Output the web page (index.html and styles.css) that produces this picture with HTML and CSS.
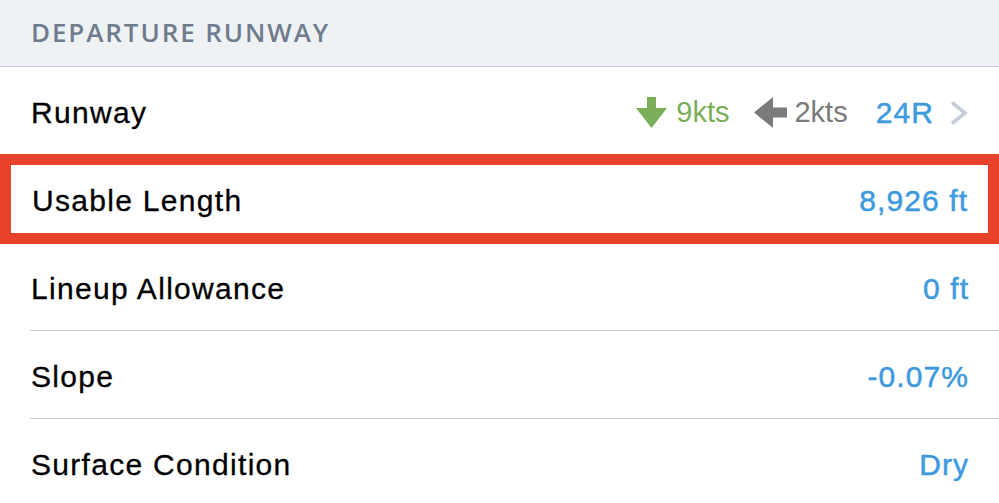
FILE: index.html
```html
<!DOCTYPE html>
<html lang="en">
<head>
  <meta charset="UTF-8" />
  <title>Departure Runway</title>
  <link rel="stylesheet" href="styles.css">
</head>
<body>
  <div class="section">
    <div class="section-head">DEPARTURE RUNWAY</div>

    <div class="row">
      <span class="label">Runway</span>
      <span class="value">
        <span class="wind wind-head">
          <svg width="31" height="31" viewBox="0 0 31 31"><path d="M11 0h9v11h11L15.5 31 0 11h11z" fill="#7aae59"/></svg>
          9kts
        </span>
        <span class="wind wind-cross">
          <svg width="33" height="31" viewBox="0 0 33 31"><path d="M33 10.5v10H19v10.5L0 15.5 19 0v10.5z" fill="#7b7b7b"/></svg>
          2kts
        </span>
        <span class="blue rwy">24R</span>
        <svg class="chev" width="19" height="26" viewBox="0 0 19 26"><path d="M3 2.5l13 10.5L3 23.5" fill="none" stroke="#c6cdd6" stroke-width="3.6"/></svg>
      </span>
    </div>

    <div class="row highlight">
      <span class="label">Usable Length</span>
      <span class="value blue">8,926 ft</span>
    </div>

    <div class="row">
      <span class="label">Lineup Allowance</span>
      <span class="value blue">0 ft</span>
    </div>

    <div class="row">
      <span class="label">Slope</span>
      <span class="value blue">-0.07%</span>
    </div>

    <div class="row">
      <span class="label">Surface Condition</span>
      <span class="value blue">Dry</span>
    </div>
  </div>
</body>
</html>
```

FILE: styles.css
```css
* { box-sizing: border-box; }
body {
  margin: 0;
  background: #fff;
  font-family: 'Liberation Sans', Arial, sans-serif;
  color: #000;
  overflow: hidden;
}
.section-head {
  height: 67px;
  background: #eff2f5;
  border-bottom: 1px solid #c6ccd6;
  padding: 14px 0 0 31px;
  font-family: 'Open Sans', sans-serif;
  font-weight: 600;
  font-size: 26px;
  letter-spacing: 1.9px;
  color: #6f7c8e;
}
.row {
  height: 88px;
  margin-left: 30px;
  padding: 4px 31px 0 0;
  border-bottom: 1px solid #c6ccd6;
  display: flex; align-items: center; justify-content: space-between;
  font-size: 30px;
}
.label {
  padding-left: 1px;
  letter-spacing: 1.3px;
  -webkit-text-stroke: 0.3px #000;
}
.value { display: flex; align-items: center; }
.blue {
  color: #3e9ade;
  letter-spacing: 1.1px;
  -webkit-text-stroke: 0.5px #3e9ade;
}
.value.blue { margin-right: -1.1px; }
.wind { display: flex; align-items: center; gap: 9px; font-size: 29px; }
.wind-head { color: #7aae59; margin-right: 25px; }
.wind-cross { color: #7b7b7b; margin-right: 28px; gap: 7px; }
.rwy { margin-right: 15px; }
.chev { display: block; }
.highlight {
  margin-left: 0;
  padding: 3px 21px 0 20px;
  border: 11px solid #e8432a;
  height: 90px;
  margin-top: -1px;
  margin-bottom: -1px;
  position: relative;
}
```
